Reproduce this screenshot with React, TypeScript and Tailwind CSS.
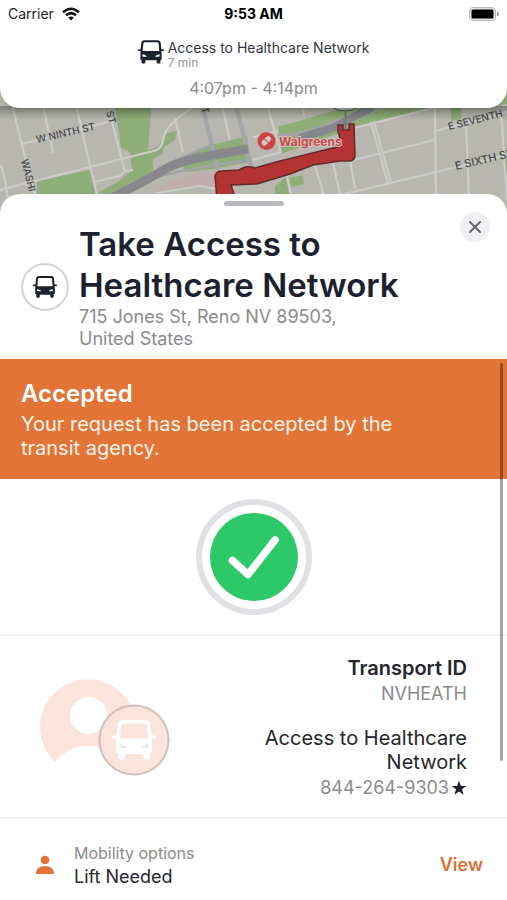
import React, { useState } from 'react';

const BusIcon = ({ className }: { className?: string }) => (
    <svg viewBox="0 0 44 40" className={className} fill="currentColor" aria-hidden="true">
        <path
            fillRule="evenodd"
            d="M11 0H33Q38 0 38.500 5L39.500 15.500H43Q44 15.500 44 17Q44 18.500 43 18.500H39.500L40 22V33H38V37.500Q38 39.500 36 39.500H33.500Q31.500 39.500 31.500 37.500V34H12.500V37.500Q12.500 39.500 10.500 39.500H8Q6 39.500 6 37.500V33H4V22L4.500 18.500H1Q0 18.500 0 17Q0 15.500 1 15.500H4.500L5.500 5Q6 0 11 0ZM12 3.500Q9.500 3.500 9 6L8 18.500H36L35 6Q34.500 3.500 32 3.500ZM7.500 24V26.500Q7.500 28 9 28H14.500Q15.500 28 14.500 27L12 25ZM36.500 24V26.500Q36.500 28 35 28H29.500Q28.500 28 29.500 27L32 25Z"
        />
    </svg>
);

const WifiIcon = () => (
    <svg viewBox="0 0 18 14" className="h-[14px] w-[18px]" aria-hidden="true">
        <path d="M1 5.200Q9 -1.800 17 5.200M4 8.300Q9 4 14 8.300" fill="none" stroke="#111" strokeWidth="2.500" />
        <path d="M6.200 10.600Q9 8.200 11.800 10.600L9 13.600Z" fill="#111" />
    </svg>
);

const BatteryIcon = () => (
    <svg viewBox="0 0 30 14" className="h-[14px] w-[30px]" aria-hidden="true">
        <rect x="0.500" y="0.500" width="26" height="13" rx="3.500" fill="#e2e2e2" stroke="#b9b9b9" />
        <rect x="2.500" y="2.500" width="22" height="9" rx="1.500" fill="#000" />
        <path d="M28 4.500Q30 5.500 30 7Q30 8.500 28 9.500Z" fill="#999" />
    </svg>
);

const roads = [
    'M11 100L22 145L36 200',
    'M43 105L53 153',
    'M76 105L98 200',
    'M111 118L125 172',
    'M22 144L112 121',
    'M0 190L157 150Q162 148 164 136Q167 124 192 108',
    'M94 182L120 176L125 171L133 170',
    'M0 166Q4 168 8 200',
    'M175 118L183 152',
    'M222 105L230 140',
    'M267 105L281 153',
    'M303 105L304 116',
    'M371 122L388 184M374 121L391 183',
    'M435 105L436 200',
    'M466 124L469 200',
    'M353 160L434 140',
    'M340 195L507 155',
    'M354 128L433 108L445 105',
    'M436 131L507 112',
    'M315 165L325 200',
    'M350 160L355 188',
    'M333 163L340 194',
    'M286 172L292 200',
    'M501 110L507 200',
    'M253 137L278 131M253 160L281 152',
    'M157 193L200 186L216 189',
];

const CityMap = () => (
    <svg
        viewBox="0 84 507 134"
        preserveAspectRatio="xMidYMid slice"
        className="-my-6 block h-[134px] w-full bg-[#b8b7af] font-['Inter',sans-serif]"
        role="img"
        aria-label="Route map"
    >
        <defs>
            <linearGradient id="map-shade" x1="0" y1="0" x2="0" y2="1">
                <stop offset="0" stopColor="#000" stopOpacity="0.300" />
                <stop offset="1" stopColor="#000" stopOpacity="0" />
            </linearGradient>
        </defs>

        {/* Parks */}
        <g fill="#8fad78">
            <path d="M114 100H152L148 150L158 147L167 133L177 131L175 140L164 147L162 154L153 159V170L138 186L120 196L97 193L118 182L132 170L130 152L121 148Z" />
            <path d="M37 181L90 170L98 196H37Z" />
            <path d="M180 158L215 144L247 136L250 162L213 169L185 172Z" />
            <path d="M278 127L350 106H445L353 128L281 154L281 146L300 138L280 138Z" />
            <path d="M275 186L287 176L289 196H275Z" />
            <path d="M289 178L303 175L304 184L291 187Z" />
            <path d="M451 105H461V119L451 121ZM503 160L507 158V175Z" />
            <path d="M495 84H507V104L495 106Z" />
        </g>
        <path d="M155 190Q172 176 216 171V189L203 185L160 194Z" fill="#bfaeab" />

        <g fill="none" stroke="#cccbc9" strokeWidth="2.200" strokeLinejoin="round">
            {roads.map((d) => (
                <path key={d} d={d} />
            ))}
        </g>
        <path d="M202 105L218 170M236 105L251 166" fill="none" stroke="#a5a6a8" strokeWidth="4.500" />

        {/* Highway */}
        <path d="M165 166Q184 156 212 145M160 176Q200 166 250 160" fill="none" stroke="#a2a3a4" strokeWidth="2.500" />
        <path d="M112 198Q147 180 167 168Q184 160 208 156L248 149" fill="none" stroke="#86888b" strokeWidth="9" />
        <path d="M278 136Q308 134 335 122L385 107" fill="none" stroke="#a2a3a4" strokeWidth="4" />
        <path d="M300 138L335 127L372 107" fill="none" stroke="#84868a" strokeWidth="8" />

        {/* Transit route */}
        <path
            d="M217 200L215 176Q216 171 222 171L239 170L245 167Q251 166 255 168L280 161L337 147Q341 145 340 138L338 132V125H343V130H349V124H354L355 156Q354 161 349 161L340 161L313 165L290 174L257 184L231 185L236 200Z"
            fill="#b43335"
            stroke="#64292c"
            strokeWidth="1.500"
        />
        <path d="M345.500 110V129" stroke="#777" strokeWidth="2" />
        <ellipse cx="345" cy="98" rx="18" ry="13" fill="#c9c9c9" stroke="#555" />

        {/* Labels */}
        <g fill="#45474a" fontSize="10" fontWeight="500">
            <text transform="translate(37 143) rotate(-13)">W NINTH ST</text>
            <text transform="translate(106 112) rotate(74)">ST</text>
            <text transform="translate(21 160) rotate(76)">WASHI</text>
            <text transform="translate(201 108) rotate(74)">T</text>
            <text transform="translate(449 130) rotate(-14)">E SEVENTH</text>
            <text transform="translate(456 170) rotate(-13)" fontSize="11">E SIXTH ST</text>
        </g>
        <circle cx="266.500" cy="141" r="9" fill="#cf4347" />
        <g transform="rotate(-45 266.500 141)" fill="#d9c9c5">
            <rect x="261" y="138" width="11" height="5.500" rx="2.700" />
            <path d="M266.500 138V143.500" stroke="#cf4347" />
        </g>
        <text
            x="279"
            y="146"
            fill="#c9474b"
            stroke="#dccdc9"
            strokeWidth="1.500"
            paintOrder="stroke"
            fontSize="12"
            fontWeight="700"
        >
            Walgreens
        </text>
        <rect x="0" y="106" width="507" height="14" fill="url(#map-shade)" />
    </svg>
);

const TripHeader = () => (
    <header className="relative z-10 rounded-b-[20px] bg-white pb-2 shadow-md">
        <div className="grid grid-cols-3 items-center px-2 pt-1 text-sm leading-5 text-[#222]">
            <div className="flex items-center gap-2">
                <span>Carrier</span>
                <WifiIcon />
            </div>
            <span className="text-center font-bold text-black">9:53 AM</span>
            <div className="flex justify-end">
                <BatteryIcon />
            </div>
        </div>

        <div className="mt-4 flex items-start justify-center gap-1">
            <BusIcon className="h-6 w-[26px] text-[#1c2130]" />
            <div>
                <p className="text-sm leading-4 text-[#33353b]">Access to Healthcare Network</p>
                <p className="text-xs leading-[14px] text-[#999]">7 min</p>
            </div>
        </div>
        <p className="mt-1.5 text-center text-base leading-6 text-[#8b8b8d]">4:07pm - 4:14pm</p>
    </header>
);

const App = () => {
    const [open, setOpen] = useState(true);

    return (
        <div className="flex min-h-screen flex-col overflow-hidden bg-white font-['Inter',sans-serif]">
            <TripHeader />
            <CityMap />

            {open && (
                <main className="relative z-10 flex grow flex-col rounded-t-[20px] bg-white">
                    <div className="mx-auto mt-[7px] h-[5px] w-[60px] rounded-full bg-[#b9babd]" />

                    <button
                        type="button"
                        aria-label="Close"
                        onClick={() => setOpen(false)}
                        className="absolute top-[18px] right-[17px] flex size-[30px] items-center justify-center rounded-full bg-[#f0f0f4]"
                    >
                        <svg viewBox="0 0 12 12" className="size-3" aria-hidden="true">
                            <path d="M1 1L11 11M11 1L1 11" stroke="#66676b" strokeWidth="2" strokeLinecap="round" />
                        </svg>
                    </button>

                    {/* Stop title */}
                    <section className="flex items-center gap-2.5 pt-[18px] pr-12 pb-[9px] pl-[21px]">
                        <div className="flex size-12 shrink-0 items-center justify-center rounded-full border-2 border-[#d4d4d4]">
                            <BusIcon className="h-[22px] w-6 text-[#1c2130]" />
                        </div>
                        <div>
                            <h1 className="max-w-[340px] text-[33px] leading-[41px] font-semibold text-[#1c2130]">
                                Take Access to Healthcare Network
                            </h1>
                            <p className="max-w-[270px] text-lg leading-[22px] text-[#8a8b8d]">
                                715 Jones St, Reno NV 89503, United States
                            </p>
                        </div>
                    </section>

                    <div className="relative">
                        <div className="absolute top-1 right-1 z-10 h-[398px] w-[3px] rounded-full bg-black/35" />

                        {/* Request status */}
                        <section className="bg-[#e27438] px-[21px] pt-[21px] pb-[19px] text-white">
                            <h2 className="text-2xl leading-7 font-semibold">Accepted</h2>
                            <p className="mt-1 max-w-[400px] text-xl leading-6 text-[#fff3e8]">
                                Your request has been accepted by the transit agency.
                            </p>
                        </section>

                        <div className="flex justify-center border-b-2 border-[#f1f1f2] pt-5 pb-[19px]">
                            <svg viewBox="0 0 116 116" className="size-[116px]" role="img" aria-label="Accepted">
                                <circle cx="58" cy="58" r="55" fill="#fff" stroke="#dfe1e4" strokeWidth="6" />
                                <circle cx="58" cy="58" r="44" fill="#2dc968" />
                                <path
                                    d="M36.500 61.500L52 75.500L79 41"
                                    fill="none"
                                    stroke="#fff"
                                    strokeWidth="7.500"
                                    strokeLinecap="round"
                                    strokeLinejoin="round"
                                />
                            </svg>
                        </div>

                        {/* Transport details */}
                        <section className="flex items-center justify-between border-b-2 border-[#f1f1f2] pt-5 pr-10 pb-[15px] pl-10">
                            <div className="relative h-[98px] w-[130px] shrink-0">
                                <svg viewBox="0 0 130 98" className="h-[98px] w-[130px] overflow-visible" aria-hidden="true">
                                    <path d="M15 82A48 48 0 1 1 81 82Q66 66 48 66Q28 66 15 82Z" fill="#fae5dc" />
                                    <circle cx="48.500" cy="35.500" r="18.500" fill="#fff" />
                                    <circle cx="94" cy="60" r="34.500" fill="#fae5dc" stroke="#d2beb7" strokeWidth="2" />
                                </svg>
                                <BusIcon className="absolute top-10 left-[72px] h-10 w-11 text-white" />
                            </div>
                            <div className="flex max-w-[220px] flex-col text-right text-xl leading-6 text-[#24262d]">
                                <h3 className="font-semibold">Transport ID</h3>
                                <p className="text-lg leading-7 text-[#8a8b8d]">NVHEATH</p>
                                <p className="mt-[18px]">Access to Healthcare Network</p>
                                <p className="flex items-center justify-end gap-0.5 text-lg leading-7 text-[#8a8b8d]">
                                    <a href="tel:844-264-9303">844-264-9303</a>
                                    <svg viewBox="0 0 24 24" className="size-4 text-[#1c2130]" fill="currentColor" aria-hidden="true">
                                        <path d="M12 1L14.800 9H23L16.500 14L18.800 22L12 17.200L5.200 22L7.500 14L1 9H9.200Z" />
                                    </svg>
                                </p>
                            </div>
                        </section>
                    </div>

                    {/* Mobility options */}
                    <section className="flex items-center pt-[22px] pr-6 pb-3 pl-9">
                        <svg viewBox="0 0 18 20" className="h-5 w-[18px]" fill="#e27438" aria-hidden="true">
                            <circle cx="9" cy="5" r="4.300" />
                            <path d="M0 19V17.500Q1 11 9 11Q17 11 18 17.500V19Z" />
                        </svg>
                        <div className="ml-5 grow">
                            <p className="text-base leading-6 text-[#8a8b8d]">Mobility options</p>
                            <p className="text-lg leading-6 text-[#24262d]">Lift Needed</p>
                        </div>
                        <button type="button" className="text-lg leading-6 font-semibold text-[#dd6f36]">
                            View
                        </button>
                    </section>
                </main>
            )}
        </div>
    );
};

export default App;
